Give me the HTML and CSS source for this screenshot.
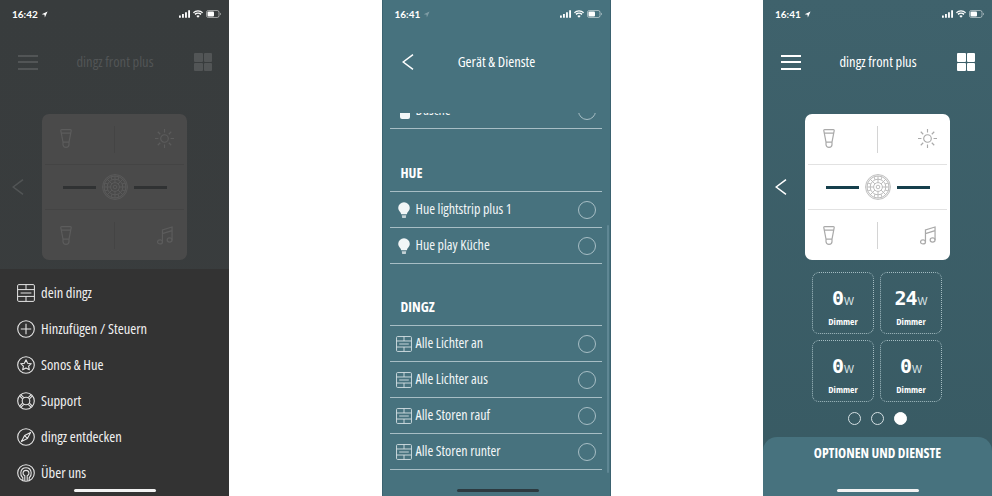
FILE: index.html
```html
<!DOCTYPE html>
<html lang="de">
<head>
  <meta charset="UTF-8">
  <title>dingz App</title>
  <link rel="stylesheet" href="styles.css">
</head>
<body>

<svg class="defs" width="0" height="0" aria-hidden="true">
  <symbol id="i-arrow" viewBox="0 0 8 8"><path d="M7.5.5 .8 3.8 4 4.2 4.4 7.4z" fill="currentColor"/></symbol>
  <symbol id="i-signal" viewBox="0 0 12 8"><path d="M0 5.5h2V8H0zM3.3 4h2v4h-2zM6.6 2h2v6h-2zM10 0h2v8h-2z" fill="currentColor"/></symbol>
  <symbol id="i-wifi" viewBox="0 0 12 9"><path d="M6 9 4 6.8a3 3 0 0 1 4 0zM3 5.7 1.7 4.3a6.3 6.3 0 0 1 8.6 0L9 5.7a4.4 4.4 0 0 0-6 0zM.9 3.5 0 2.4a8.8 8.8 0 0 1 12 0l-.9 1.1a7.4 7.4 0 0 0-10.2 0z" fill="currentColor"/></symbol>
  <symbol id="i-battery" viewBox="0 0 15 8"><rect x=".5" y=".5" width="12.5" height="7" rx="1.8" fill="none" stroke="currentColor" opacity=".5"/><rect x="1.5" y="1.5" width="6.5" height="5" rx="1" fill="currentColor"/><path d="M14 2.8c.6.2 1 .6 1 1.2s-.4 1-1 1.2z" fill="currentColor" opacity=".5"/></symbol>
  <symbol id="i-hue" viewBox="0 0 12 19"><path d="M1.600.7h8.800c.6 0 .9.3.8.9l-2.200 11.600v2.300c0 1.600-1.200 2.800-3 2.800s-3-1.200-3-2.800v-2.300L.8 1.600c-.1-.6.2-.9.8-.9zM1.200 4.200h9.600M3 13.200h6" fill="none" stroke="currentColor" stroke-width="1.200" stroke-linejoin="round"/></symbol>
  <symbol id="i-sun" viewBox="0 0 20 20"><g fill="none" stroke="currentColor" stroke-width="1.200"><circle cx="10" cy="10" r="4"/><path d="M10 0v3.600M10 16.400V20M0 10h3.600M16.400 10H20M2.900 2.900l2.600 2.600M14.500 14.500l2.600 2.600M2.900 17.100l2.600-2.600M14.500 5.500l2.600-2.600"/></g></symbol>
  <symbol id="i-music" viewBox="0 0 17 20"><g fill="none" stroke="currentColor" stroke-width="1.300"><ellipse cx="3.200" cy="16.800" rx="2.600" ry="2.200"/><ellipse cx="13.400" cy="14.800" rx="2.600" ry="2.200"/><path d="M5.800 16.800V4.200L16 1v13.800M5.800 8 16 4.800"/></g></symbol>
  <symbol id="i-sensor" viewBox="0 0 26 26"><g fill="none" stroke="currentColor" stroke-width=".9"><circle cx="13" cy="13" r="12.400"/><circle cx="13" cy="13" r="11"/><circle cx="13" cy="13" r="7.800"/><circle cx="13" cy="13" r="4.400"/><circle cx="13" cy="13" r="1.800"/><path d="M13 2v3.200M13 20.800V24M2 13h3.200M20.800 13H24M5.200 5.200l2.300 2.300M18.500 18.500l2.300 2.300M5.200 20.800l2.300-2.300M18.500 7.500l2.300-2.300M9 2.800l1 3M16 20.200l1 3M2.800 17l3-1M20.200 10l3-1M17 2.800l-1 3M10 20.200l-1 3M2.800 9l3 1M20.200 16l3 1M13 5.200v3.400M13 17.400v3.400M5.200 13h3.400M17.400 13h3.400M7.500 7.500l2.400 2.400M16.100 16.100l2.400 2.400M7.500 18.500l2.400-2.400M16.100 9.900l2.400-2.400"/></g></symbol>
  <symbol id="i-dingz" viewBox="0 0 18 18"><g fill="none" stroke="currentColor"><rect x=".6" y=".6" width="16.800" height="16.800" rx="1.200"/><path d="M.6 5.600h16.800M.6 12.400h16.800M9 .6v5M9 12.400v5M3.600 9h10.800"/></g></symbol>
  <symbol id="i-plus" viewBox="0 0 18 18"><g fill="none" stroke="currentColor" stroke-width="1.100"><circle cx="9" cy="9" r="8.300"/><path d="M9 3.800v10.400M3.800 9h10.400"/></g></symbol>
  <symbol id="i-star" viewBox="0 0 18 18"><g fill="none" stroke="currentColor" stroke-width="1.100" stroke-linejoin="round"><circle cx="9" cy="9" r="8.300"/><path d="m9 3.800 1.600 3.400 3.700.5-2.700 2.500.7 3.600L9 12l-3.300 1.800.7-3.600-2.700-2.500 3.700-.5z"/></g></symbol>
  <symbol id="i-buoy" viewBox="0 0 18 18"><g fill="none" stroke="currentColor" stroke-width="1.100"><circle cx="9" cy="9" r="8.300"/><circle cx="9" cy="9" r="3.800"/><path d="m3.800 2.600 3 3M2.600 3.800l3 3M14.200 2.600l-3 3M15.400 3.800l-3 3M3.800 15.400l3-3M2.600 14.200l3-3M14.200 15.400l-3-3M15.400 14.200l-3-3"/></g></symbol>
  <symbol id="i-compass" viewBox="0 0 18 18"><g fill="none" stroke="currentColor" stroke-width="1.100" stroke-linejoin="round"><circle cx="9" cy="9" r="8.300"/><path d="M13.600 4.400 10.400 10.400 4.400 13.600 7.600 7.600zM7.600 7.600l2.800 2.800"/></g></symbol>
  <symbol id="i-head" viewBox="0 0 18 18"><g fill="none" stroke="currentColor" stroke-width="1.100"><circle cx="9" cy="9" r="8.300"/><path d="M5.800 16.400V13.800C4.300 12.600 3.600 10.800 3.800 8.800 4.100 5.800 6.300 3.800 9 3.800s4.900 2 5.200 5c.2 2-.5 3.800-2 5v2.600"/><path d="M7.800 16.800v-5C6.500 11.200 5.900 10.200 6 9c.2-1.600 1.500-2.600 3-2.600s2.800 1 3 2.600c.1 1.200-.5 2.200-1.800 2.800v5"/></g></symbol>
  <symbol id="i-bulb" viewBox="0 0 12 16"><path d="M6 .2a5.800 5.800 0 0 1 5.800 5.800c0 2.600-2.500 3.700-3 6.300H3.200c-.5-2.600-3-3.700-3-6.300A5.800 5.800 0 0 1 6 .2z" fill="currentColor"/><path d="M3.800 13.200h4.400l-.4 2.800H4.200z" fill="#c3d1d5"/></symbol>
  <symbol id="i-strip" viewBox="0 0 10 16"><rect y="1" width="10" height="15" rx="2" fill="currentColor"/></symbol>
  <symbol id="i-chevron" viewBox="0 0 12 16"><path d="M11 .6 1.200 8 11 15.400" fill="none" stroke="currentColor" stroke-width="1.500"/></symbol>
</svg>

<main class="screens">

  <!-- menu open over the dimmed device view -->
  <section class="phone phone-dim">
    <div class="status">
      <span class="time">16:42 <svg class="arrow"><use href="#i-arrow"/></svg></span>
      <span class="status-icons">
        <svg class="signal"><use href="#i-signal"/></svg>
        <svg class="wifi"><use href="#i-wifi"/></svg>
        <svg class="battery"><use href="#i-battery"/></svg>
      </span>
    </div>
    <header class="topbar">
      <div class="burger"><i></i><i></i><i></i></div>
      <h1 class="title">dingz front plus</h1>
      <div class="squares"><i></i><i></i><i></i><i></i></div>
    </header>
    <div class="stage">
      <svg class="chevron"><use href="#i-chevron"/></svg>
      <div class="plate">
        <div class="plate-row">
          <svg class="hue-icon"><use href="#i-hue"/></svg>
          <span class="vline"></span>
          <svg class="sun-icon"><use href="#i-sun"/></svg>
        </div>
        <div class="plate-mid">
          <span class="dash"></span>
          <svg class="sensor"><use href="#i-sensor"/></svg>
          <span class="dash"></span>
        </div>
        <div class="plate-row">
          <svg class="hue-icon"><use href="#i-hue"/></svg>
          <span class="vline"></span>
          <svg class="music-icon"><use href="#i-music"/></svg>
        </div>
      </div>
    </div>
    <nav class="menu">
      <a class="menu-item"><svg><use href="#i-dingz"/></svg>dein dingz</a>
      <a class="menu-item"><svg><use href="#i-plus"/></svg>Hinzufügen / Steuern</a>
      <a class="menu-item"><svg><use href="#i-star"/></svg>Sonos &amp; Hue</a>
      <a class="menu-item"><svg><use href="#i-buoy"/></svg>Support</a>
      <a class="menu-item"><svg><use href="#i-compass"/></svg>dingz entdecken</a>
      <a class="menu-item"><svg><use href="#i-head"/></svg>Über uns</a>
    </nav>
    <span class="homebar"></span>
  </section>

  <!-- service list -->
  <section class="phone phone-list">
    <div class="status">
      <span class="time">16:41 <svg class="arrow faint"><use href="#i-arrow"/></svg></span>
      <span class="status-icons">
        <svg class="signal"><use href="#i-signal"/></svg>
        <svg class="wifi"><use href="#i-wifi"/></svg>
        <svg class="battery"><use href="#i-battery"/></svg>
      </span>
    </div>
    <header class="topbar">
      <svg class="back"><use href="#i-chevron"/></svg>
      <h1 class="title">Gerät &amp; Dienste</h1>
      <span></span>
    </header>
    <div class="list">
      <div class="row row-cut"><svg class="row-strip"><use href="#i-strip"/></svg>Dusche<span class="radio"></span></div>

      <h2 class="list-head">HUE</h2>
      <div class="row"><svg class="row-bulb"><use href="#i-bulb"/></svg>Hue lightstrip plus 1<span class="radio"></span></div>
      <div class="row"><svg class="row-bulb"><use href="#i-bulb"/></svg>Hue play Küche<span class="radio"></span></div>

      <h2 class="list-head">DINGZ</h2>
      <div class="row"><svg class="row-dingz"><use href="#i-dingz"/></svg>Alle Lichter an<span class="radio"></span></div>
      <div class="row"><svg class="row-dingz"><use href="#i-dingz"/></svg>Alle Lichter aus<span class="radio"></span></div>
      <div class="row"><svg class="row-dingz"><use href="#i-dingz"/></svg>Alle Storen rauf<span class="radio"></span></div>
      <div class="row"><svg class="row-dingz"><use href="#i-dingz"/></svg>Alle Storen runter<span class="radio"></span></div>
    </div>
    <span class="scrollbar"></span>
    <span class="homebar"></span>
  </section>

  <!-- device view -->
  <section class="phone phone-main">
    <div class="status">
      <span class="time">16:41 <svg class="arrow"><use href="#i-arrow"/></svg></span>
      <span class="status-icons">
        <svg class="signal"><use href="#i-signal"/></svg>
        <svg class="wifi"><use href="#i-wifi"/></svg>
        <svg class="battery"><use href="#i-battery"/></svg>
      </span>
    </div>
    <header class="topbar">
      <div class="burger"><i></i><i></i><i></i></div>
      <h1 class="title">dingz front plus</h1>
      <div class="squares"><i></i><i></i><i></i><i></i></div>
    </header>
    <div class="stage">
      <svg class="chevron"><use href="#i-chevron"/></svg>
      <div class="plate">
        <div class="plate-row">
          <svg class="hue-icon"><use href="#i-hue"/></svg>
          <span class="vline"></span>
          <svg class="sun-icon"><use href="#i-sun"/></svg>
        </div>
        <div class="plate-mid">
          <span class="dash"></span>
          <svg class="sensor"><use href="#i-sensor"/></svg>
          <span class="dash"></span>
        </div>
        <div class="plate-row">
          <svg class="hue-icon"><use href="#i-hue"/></svg>
          <span class="vline"></span>
          <svg class="music-icon"><use href="#i-music"/></svg>
        </div>
      </div>
    </div>
    <div class="tiles">
      <div class="tile"><b>0<small>W</small></b><span>Dimmer</span></div>
      <div class="tile"><b>24<small>W</small></b><span>Dimmer</span></div>
      <div class="tile"><b>0<small>W</small></b><span>Dimmer</span></div>
      <div class="tile"><b>0<small>W</small></b><span>Dimmer</span></div>
    </div>
    <div class="dots"><i></i><i></i><i class="on"></i></div>
    <div class="panel">OPTIONEN UND DIENSTE</div>
    <span class="homebar"></span>
  </section>

</main>

</body>
</html>
```

FILE: styles.css
```css
* { box-sizing: border-box; }
body { margin: 0; background: #fff; font-family: "Open Sans", Lato, sans-serif; font-stretch: 75%; color: #fff; }
.defs { position: absolute; }
.screens { display: flex; justify-content: space-between; width: 992px; height: 496px; overflow: hidden; }

.phone { position: relative; width: 229px; height: 496px; overflow: hidden; display: flex; flex-direction: column; }
.phone-dim { background: linear-gradient(#383c3d, #3a3d3e); }
.phone-list { background: #47727e; border-left: 1px solid #3b6270; border-right: 1px solid #3b6270; }
.phone-main { background: linear-gradient(#3f626c, #385a63); }

/* status bar */
.status { height: 28px; flex: none; display: flex; justify-content: space-between; align-items: center; padding: 0 8px 0 12px; }
.time { display: flex; align-items: center; gap: 3px; font-family: Lato, sans-serif; font-size: 10px; font-weight: 700; }
.arrow { width: 7px; height: 7px; }
.arrow.faint { opacity: .3; }
.status-icons { display: flex; align-items: center; gap: 3px; }
.signal { width: 11px; height: 8px; }
.wifi { width: 10px; height: 8px; }
.battery { width: 15px; height: 8px; }

/* top bar */
.topbar { margin-top: 14px; height: 40px; flex: none; display: grid; grid-template-columns: 1fr auto 1fr; align-items: center; padding: 0 17px 0 18px; }
.title { margin: 0 0 1px; font-size: 14.500px; font-weight: 500; }
.burger { display: flex; flex-direction: column; gap: 4.500px; width: 20px; }
.burger i { height: 2px; background: currentColor; }
.squares { justify-self: end; display: grid; grid-template-columns: 8.500px 8.500px; gap: 1px; }
.squares i { height: 8.500px; border-radius: 1px; background: currentColor; }
.back { width: 12px; height: 16px; margin-left: 1px; }

/* switch plate */
.stage { display: flex; align-items: center; margin-top: 32px; padding-left: 12px; gap: 18px; flex: none; }
.chevron { width: 12px; height: 16px; }
.plate { width: 145px; height: 146px; background: #fff; border-radius: 7px; padding: 0 3px; display: flex; flex-direction: column; color: #a9a9a9; }
.plate-row { flex: 1; display: grid; grid-template-columns: 1fr 1px 1fr; align-items: center; }
.plate-mid { height: 46px; border-top: 1px solid #e2e2e2; border-bottom: 1px solid #e2e2e2; display: flex; align-items: center; justify-content: center; gap: 6px; flex: none; }
.dash { width: 33px; height: 3px; background: #153f4c; }
.sensor { width: 26px; height: 26px; color: #b5b5b5; }
.vline { width: 1px; height: 27px; background: #d4d4d4; }
.hue-icon { width: 12px; height: 19px; margin: -2px 0 0 15px; }
.sun-icon { width: 19px; height: 19px; justify-self: end; margin: -2px 10px 0 0; }
.plate-row:last-child .hue-icon { margin-top: 0; }
.music-icon { width: 16px; height: 19px; justify-self: end; margin-right: 11px; }

/* watt tiles */
.tiles { margin: 12px 0 0 49px; display: grid; grid-template-columns: 62px 62px; grid-auto-rows: 62px; gap: 6px; }
.tile { border: 1px dotted #a4bcc2; border-radius: 7px; display: flex; flex-direction: column; align-items: center; }
.tile b { margin-top: 13px; height: 24px; font-family: "DejaVu Sans Mono", monospace; font-size: 20px; line-height: 24px; font-weight: 700; letter-spacing: -1px; }
.tile small { margin-left: 1px; font-family: "Liberation Sans", sans-serif; font-size: 10.500px; font-weight: 400; letter-spacing: 0; color: #dbe5e8; }
.tile span { margin-top: 5px; font-size: 9.500px; font-weight: 700; }

.dots { margin-top: 10px; display: flex; justify-content: center; gap: 10px; }
.dots i { width: 13px; height: 13px; border: 1px solid #d5e0e3; border-radius: 50%; }
.dots .on { background: #fff; border-color: #fff; }

.panel { margin-top: 12px; flex: 1; background: #47727e; border-radius: 14px 14px 0 0; padding-top: 8px; text-align: center; font-size: 13.700px; line-height: 16px; font-weight: 700; }

/* dimmed variant */
.phone-dim .title, .phone-dim .burger, .phone-dim .squares, .phone-dim .chevron { color: #525556; }
.phone-dim .plate { background: #4a4a4a; color: #5c5c5c; }
.phone-dim .plate-mid { border-color: #444; }
.phone-dim .vline { background: #444; }
.phone-dim .dash { background: #303233; }
.phone-dim .sensor { color: #5c5c5c; }

/* slide-in menu */
.menu { position: absolute; left: 0; right: 0; top: 269px; bottom: 0; background: #333; padding: 6px 0 0 17px; }
.menu-item { display: flex; align-items: center; gap: 6px; height: 36px; padding-bottom: 2px; font-size: 14.500px; color: #f0f0f0; }
.menu-item svg { width: 18px; height: 18px; margin-top: 2px; color: #e6e6e6; }

/* service list */
.list { margin: 31px 8px 0 7px; height: 360px; overflow: hidden; }
.row { height: 36px; display: flex; align-items: center; padding: 0 6px 2px; border-bottom: 1px solid #a7bec5; font-size: 14px; color: #f2f6f7; }
.row-cut { margin-top: -20px; margin-bottom: 1px; }
.row svg { margin-top: 2px; margin-right: 4px; flex: none; }
.row-strip { width: 10px; height: 16px; margin-left: 4px; margin-right: 6px !important; }
.row-bulb { width: 12px; height: 16px; margin-left: 2px; margin-right: 6px !important; }
.row-dingz { width: 16px; height: 16px; color: #d8e3e6; }
.radio { margin-left: auto; margin-top: 2px; width: 18px; height: 18px; border: 1px solid #a7bec5; border-radius: 50%; }
.list-head { margin: 0; height: 62px; display: flex; align-items: flex-end; padding: 0 0 10px 11px; border-bottom: 1px solid #a7bec5; font-size: 14px; line-height: 16px; font-weight: 700; }
.scrollbar { position: absolute; right: 1px; top: 225px; width: 2px; height: 248px; background: #5f8794; border-radius: 1px; }

.homebar { position: absolute; left: 74px; bottom: 4px; width: 82px; height: 3px; border-radius: 2px; background: #f2f2f2; }
.phone-list .homebar { background: #2c3a40; }
```
